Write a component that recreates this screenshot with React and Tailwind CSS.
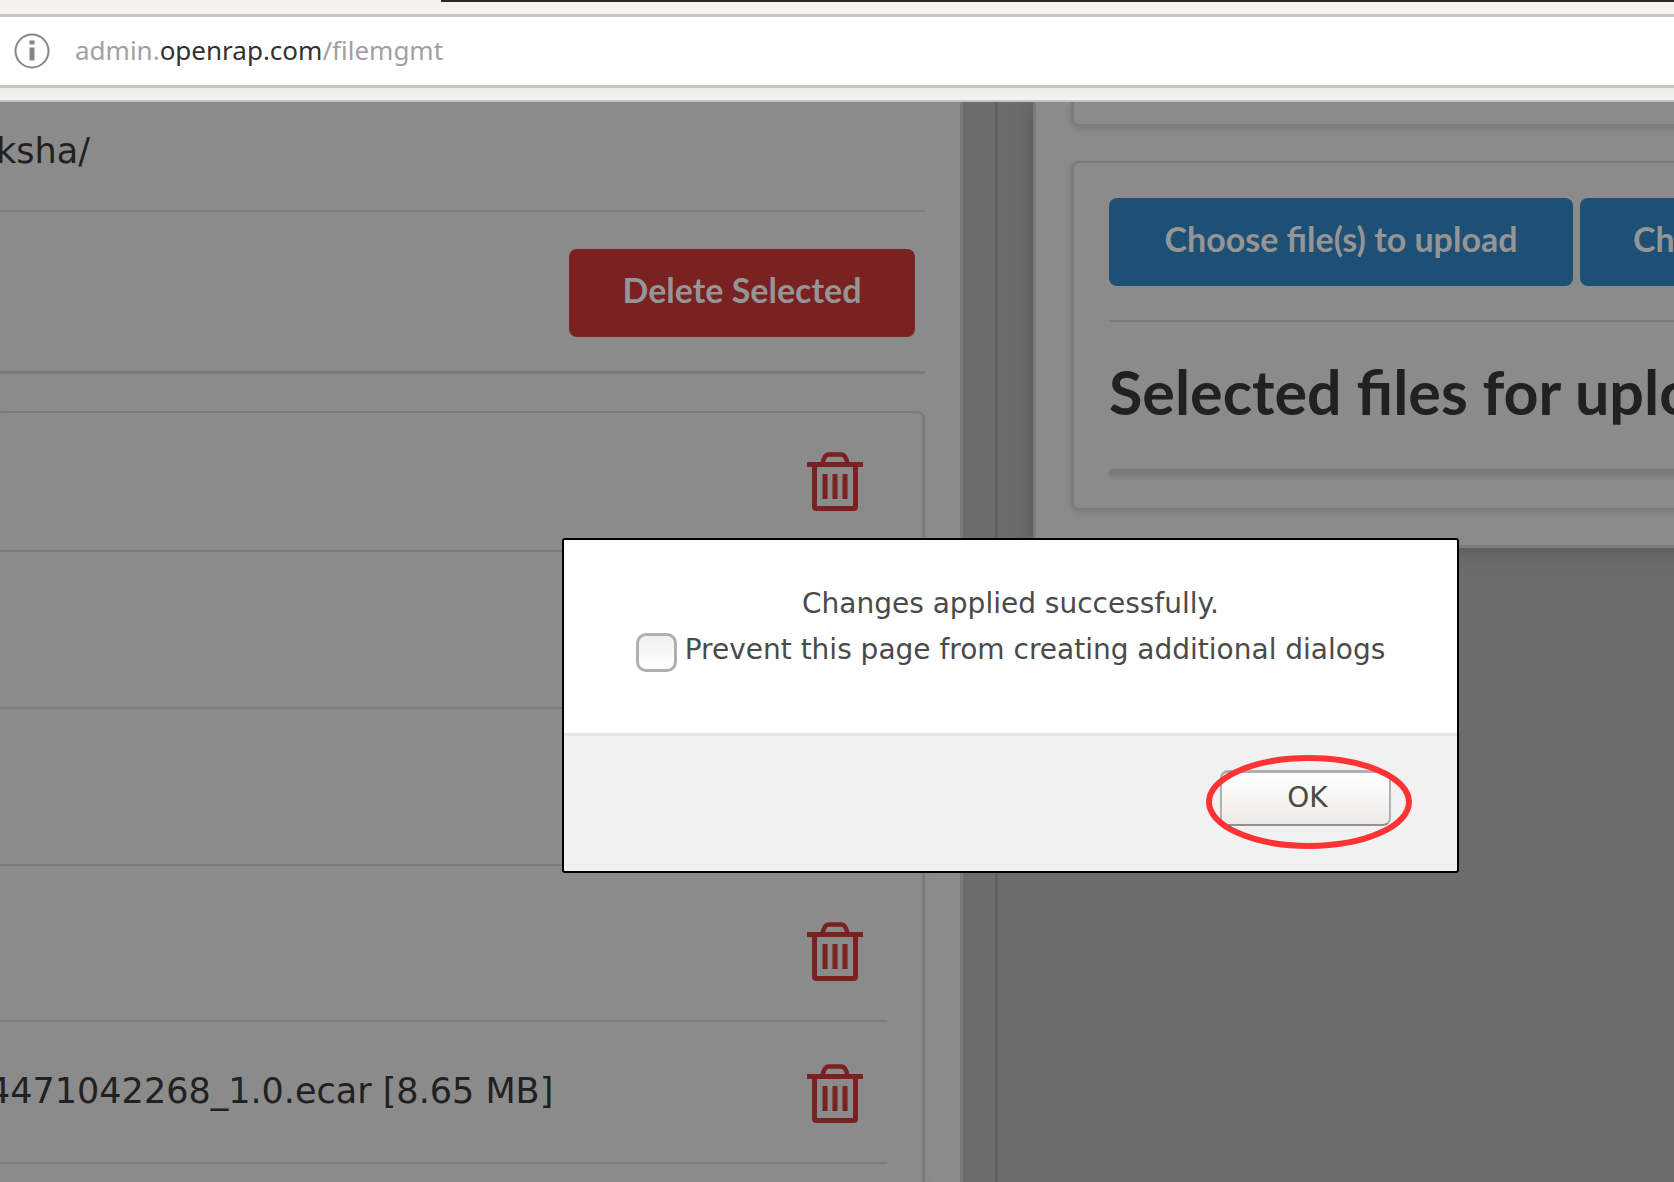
const files = [
  { name: '', removable: true, height: 'h-[139px]' },
  { name: '', removable: false, height: 'h-[157px]' },
  { name: '', removable: false, height: 'h-[157px]' },
  { name: '', removable: true, height: 'h-[156px]' },
  { name: '4471042268_1.0.ecar [8.65 MB]', removable: true, height: 'h-[142px]' },
];

function InfoIcon() {
  return (
    <svg width="36" height="36" viewBox="0 0 36 36" fill="none" aria-hidden="true">
      <circle cx="18" cy="18" r="16.5" stroke="#868686" strokeWidth="2" />
      <path d="M15.500 7.500h5v4h-5zM15.500 14.500h5v13h-5z" fill="#868686" />
    </svg>
  );
}

function TrashIcon() {
  return (
    <svg width="57" height="59" viewBox="0 0 57 59" fill="none" stroke="#7a2121" strokeWidth="5" aria-hidden="true">
      <path d="M1 12.500H57" />
      <path d="M16.500 12c1-6 3-9.500 6-9.500h13c3 0 5 3.500 6 9.500" strokeWidth="4.500" />
      <path d="M8.500 12V54.500Q8.500 56.500 10.500 56.500H47.500Q49.500 56.500 49.500 54.500V12" />
      <path d="M19 22V47M29 22V47M39 22V47" />
    </svg>
  );
}

function Browser() {
  return (
    <header className="shrink-0">
      <div className="flex h-[14px] items-start bg-[#f3f2f1]">
        <div className="ml-[441px] h-[2px] flex-1 bg-[#2b2723]" />
      </div>
      <div className="flex h-[74px] items-center border-y-3 border-[#c8c6c3] bg-white pl-[14px]">
        <button type="button" aria-label="Site information">
          <InfoIcon />
        </button>
        <div
          role="textbox"
          aria-label="Address"
          contentEditable
          suppressContentEditableWarning
          className="ml-[25px] flex-1 pb-[2px] font-['Noto_Sans',sans-serif] text-[26px] leading-[36px] text-[#a3a0a3] outline-none"
        >
          admin.<span className="text-[#333033]">openrap.com</span>/filemgmt
        </div>
      </div>
      <div className="h-[14px] border-b-2 border-[#c5c4c2] bg-linear-to-b from-[#ecebea] to-[#f4f3f2]" />
    </header>
  );
}

function FilePanel() {
  return (
    <section className="flex flex-col overflow-hidden border-r-3 border-[#7b7b7b] bg-[#8b8b8b] pr-[35px]">
      <p className="-ml-1 h-[110px] shrink-0 border-b-2 border-[#7b7b7b] pt-[27px] text-[35px] leading-[44px]">ksha/</p>
      <div className="flex h-[162px] shrink-0 justify-end border-b-3 border-[#7b7b7b] pt-[37px] pr-[10px]">
        <button type="button" className="h-[88px] w-[346px] rounded-lg bg-[#7a2121] pb-[6px] font-['Lato',sans-serif] text-[34px] leading-[44px] font-bold text-[#959595]">
          Delete Selected
        </button>
      </div>
      <ul className="mt-[37px] flex-1 rounded-tr-lg border-t-2 border-r-3 border-[#7b7b7b] pr-[35px] shadow-[2px_2px_4px_#8080804d]">
        {files.map((file, i) => (
          <li key={i} className={'flex items-end justify-between border-b-2 border-[#7b7b7b] pr-[24px] pb-[39px] ' + file.height}>
            <span className="-ml-3 pb-[10px] text-[35px] leading-[44px] whitespace-nowrap">{file.name}</span>
            {file.removable && (
              <button type="button" aria-label="Delete file">
                <TrashIcon />
              </button>
            )}
          </li>
        ))}
      </ul>
    </section>
  );
}

const blueButton =
  "h-[88px] shrink-0 rounded-lg bg-[#1e5075] pb-[6px] font-['Lato',sans-serif] text-[34px] leading-[44px] font-bold whitespace-nowrap text-[#959595]";

function UploadPanel() {
  return (
    <section className="flex flex-col items-stretch overflow-hidden bg-[#6c6c6c] pl-[32px]">
      <div className="flex-1 border-l-3 border-[#606060] pl-[35px]">
        <div className="-mr-8 border-b-3 border-l-3 border-[#7b7b7b] bg-[#8b8b8b] pb-[35px] pl-[35px] shadow-[0_2px_20px_#00000030]">
          <div className="h-[24px] rounded-bl-lg border-b-2 border-l-3 border-[#7b7b7b] shadow-[0_3px_6px_#00000026]" />
          <div className="mt-[35px] rounded-l-lg border-y-2 border-l-3 border-[#7b7b7b] pt-[35px] pl-[35px] shadow-[0_3px_6px_#00000020]">
            <div className="flex gap-[7px] overflow-hidden">
              <button type="button" className={blueButton + ' w-[464px]'}>Choose file(s) to upload</button>
              <button type="button" className={blueButton + ' px-[53px]'}>Choose folder to upload</button>
            </div>
            <h2 className="mt-[34px] overflow-hidden border-t-2 border-[#7b7b7b] pt-[32px] font-['Lato',sans-serif] text-[61px] leading-[76px] font-bold whitespace-nowrap">
              Selected files for upload
            </h2>
            <div className="mt-[39px] mb-[34px] h-[5px] bg-[#7b7b7b] shadow-[0_3px_4px_#00000020]" />
          </div>
        </div>
      </div>
    </section>
  );
}

function Dialog() {
  return (
    <div
      role="dialog"
      aria-labelledby="dialog-message"
      className="absolute top-[538px] left-[562px] w-[897px] rounded-[3px] border-2 border-black bg-[#f1f1f1] text-[28px] leading-[46px] text-[#4a4a4a]"
    >
      <div className="flex h-[196px] flex-col items-center border-b-3 border-[#e6e6e6] bg-white pt-[41px]">
        <p id="dialog-message">Changes applied successfully.</p>
        <label className="flex items-center gap-2 whitespace-nowrap">
          <input
            type="checkbox"
            className="mt-1 h-[39px] w-[41px] appearance-none rounded-[10px] border-3 border-[#b0b0b0] bg-linear-to-b from-[#f0f0f0] to-white"
          />
          Prevent this page from creating additional dialogs
        </label>
      </div>
      <div className="flex h-[135px] justify-end pt-[34px] pr-[66px]">
        <div className="relative h-[56px] w-[171px]">
          <button
            type="button"
            className="h-full w-full rounded-lg border-2 border-t-3 border-[#b0b0b0] border-b-[#929292] bg-linear-to-b from-white to-[#edebe9] pb-[2px] pl-1 text-[28px] leading-[46px]"
          >
            OK
          </button>
          <svg className="pointer-events-none absolute -top-[15px] -left-[14px]" width="206" height="94" viewBox="0 0 206 94" fill="none" aria-hidden="true">
            <ellipse cx="103" cy="47" rx="100" ry="44" stroke="#ff3333" strokeWidth="6" />
          </svg>
        </div>
      </div>
    </div>
  );
}

export default function App() {
  return (
    <div className="relative flex h-screen flex-col overflow-hidden bg-[#6c6c6c] font-['DejaVu_Sans',sans-serif] text-[#212121]">
      <Browser />
      <main className="grid min-h-0 flex-1 grid-cols-[963fr_711fr]">
        <FilePanel />
        <UploadPanel />
      </main>
      <Dialog />
    </div>
  );
}
